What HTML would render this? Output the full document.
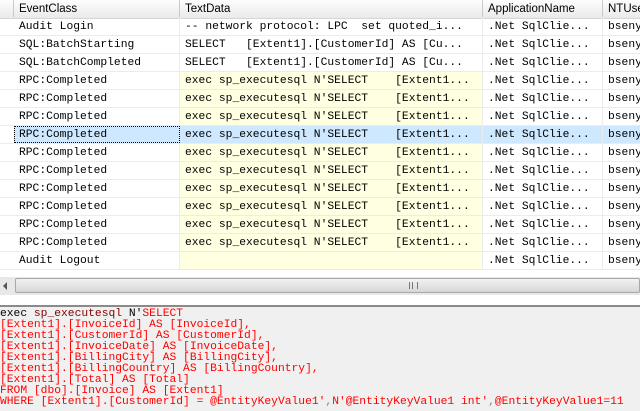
<!DOCTYPE html>
<html><head><style>
body{margin:0;width:640px;height:411px;overflow:hidden;background:#fff;font-family:"Liberation Sans",sans-serif;position:relative}
.hdr{position:absolute;top:0;left:0;width:640px;height:18px;background:linear-gradient(#fdfdfd,#eaeaea);border-bottom:1px solid #d5d5d5}
.hc{position:absolute;top:0;height:17px;border-right:1px solid #c9c9c9;font-size:11.5px;line-height:18px;padding-left:5px;color:#000;box-sizing:border-box}
.row{position:absolute;left:0;width:640px;height:18px;border-bottom:1px solid #ececec;box-sizing:border-box;font-family:"Liberation Mono",monospace;font-size:11.3px;line-height:18px;white-space:pre}
.c{position:absolute;top:0;height:17px;border-right:1px solid #ececec;box-sizing:border-box;padding-left:5px;overflow:hidden}
.y{background:#ffffe1}
.sel .c{background:#cde8ff}
.sb{position:absolute;top:277px;left:0;width:640px;height:18px;background:#e8e8e8}
.th{position:absolute;top:1px;left:15px;right:0;height:15px;background:linear-gradient(#f2f2f2,#d6d6d6);border:1px solid #a8a8a8;border-radius:2px;box-sizing:border-box}
.bot{position:absolute;top:305px;left:0;width:640px;height:106px;background:#f0f0f0;border-top:2px solid #8a8a8a;font-family:"Liberation Mono",monospace;font-size:11.3px;line-height:11px;white-space:pre;color:#f00;padding-top:2px;box-sizing:border-box}
</style></head><body>
<div class="hdr">
<div class="hc" style="left:0;width:14px"></div>
<div class="hc" style="left:14px;width:166px">EventClass</div>
<div class="hc" style="left:180px;width:303px">TextData</div>
<div class="hc" style="left:483px;width:120px">ApplicationName</div>
<div class="hc" style="left:603px;width:40px">NTUser</div>
</div>
<div class="row" style="top:18px"><div class="c" style="left:14px;width:166px">Audit Login</div><div class="c" style="left:180px;width:303px">-- network protocol: LPC  set quoted_i...</div><div class="c" style="left:483px;width:120px">.Net SqlClie...</div><div class="c" style="left:603px;width:40px">bseny</div></div>
<div class="row" style="top:36px"><div class="c" style="left:14px;width:166px">SQL:BatchStarting</div><div class="c" style="left:180px;width:303px">SELECT   [Extent1].[CustomerId] AS [Cu...</div><div class="c" style="left:483px;width:120px">.Net SqlClie...</div><div class="c" style="left:603px;width:40px">bseny</div></div>
<div class="row" style="top:54px"><div class="c" style="left:14px;width:166px">SQL:BatchCompleted</div><div class="c" style="left:180px;width:303px">SELECT   [Extent1].[CustomerId] AS [Cu...</div><div class="c" style="left:483px;width:120px">.Net SqlClie...</div><div class="c" style="left:603px;width:40px">bseny</div></div>
<div class="row" style="top:72px"><div class="c" style="left:14px;width:166px">RPC:Completed</div><div class="c y" style="left:180px;width:303px">exec sp_executesql N'SELECT    [Extent1...</div><div class="c" style="left:483px;width:120px">.Net SqlClie...</div><div class="c" style="left:603px;width:40px">bseny</div></div>
<div class="row" style="top:90px"><div class="c" style="left:14px;width:166px">RPC:Completed</div><div class="c y" style="left:180px;width:303px">exec sp_executesql N'SELECT    [Extent1...</div><div class="c" style="left:483px;width:120px">.Net SqlClie...</div><div class="c" style="left:603px;width:40px">bseny</div></div>
<div class="row" style="top:108px"><div class="c" style="left:14px;width:166px">RPC:Completed</div><div class="c y" style="left:180px;width:303px">exec sp_executesql N'SELECT    [Extent1...</div><div class="c" style="left:483px;width:120px">.Net SqlClie...</div><div class="c" style="left:603px;width:40px">bseny</div></div>
<div class="row sel" style="top:126px"><div class="c" style="left:14px;width:166px;outline:1px dotted #000;outline-offset:-1px">RPC:Completed</div><div class="c" style="left:180px;width:303px">exec sp_executesql N'SELECT    [Extent1...</div><div class="c" style="left:483px;width:120px">.Net SqlClie...</div><div class="c" style="left:603px;width:40px">bseny</div></div>
<div class="row" style="top:144px"><div class="c" style="left:14px;width:166px">RPC:Completed</div><div class="c y" style="left:180px;width:303px">exec sp_executesql N'SELECT    [Extent1...</div><div class="c" style="left:483px;width:120px">.Net SqlClie...</div><div class="c" style="left:603px;width:40px">bseny</div></div>
<div class="row" style="top:162px"><div class="c" style="left:14px;width:166px">RPC:Completed</div><div class="c y" style="left:180px;width:303px">exec sp_executesql N'SELECT    [Extent1...</div><div class="c" style="left:483px;width:120px">.Net SqlClie...</div><div class="c" style="left:603px;width:40px">bseny</div></div>
<div class="row" style="top:180px"><div class="c" style="left:14px;width:166px">RPC:Completed</div><div class="c y" style="left:180px;width:303px">exec sp_executesql N'SELECT    [Extent1...</div><div class="c" style="left:483px;width:120px">.Net SqlClie...</div><div class="c" style="left:603px;width:40px">bseny</div></div>
<div class="row" style="top:198px"><div class="c" style="left:14px;width:166px">RPC:Completed</div><div class="c y" style="left:180px;width:303px">exec sp_executesql N'SELECT    [Extent1...</div><div class="c" style="left:483px;width:120px">.Net SqlClie...</div><div class="c" style="left:603px;width:40px">bseny</div></div>
<div class="row" style="top:216px"><div class="c" style="left:14px;width:166px">RPC:Completed</div><div class="c y" style="left:180px;width:303px">exec sp_executesql N'SELECT    [Extent1...</div><div class="c" style="left:483px;width:120px">.Net SqlClie...</div><div class="c" style="left:603px;width:40px">bseny</div></div>
<div class="row" style="top:234px"><div class="c" style="left:14px;width:166px">RPC:Completed</div><div class="c y" style="left:180px;width:303px">exec sp_executesql N'SELECT    [Extent1...</div><div class="c" style="left:483px;width:120px">.Net SqlClie...</div><div class="c" style="left:603px;width:40px">bseny</div></div>
<div class="row" style="top:252px"><div class="c" style="left:14px;width:166px">Audit Logout</div><div class="c y" style="left:180px;width:303px"></div><div class="c" style="left:483px;width:120px">.Net SqlClie...</div><div class="c" style="left:603px;width:40px">bseny</div></div>
<div class="sb"><div style="position:absolute;left:3px;top:5px;width:0;height:0;border-top:4px solid transparent;border-bottom:4px solid transparent;border-right:4px solid #555"></div><div class="th"><div style="position:absolute;left:393px;top:3px;width:7px;height:7px;border-left:1px solid #777;border-right:1px solid #777"><div style="margin-left:2px;width:1px;height:7px;background:#777"></div></div></div></div>
<div class="bot"><span style="color:#000">exec </span><span style="color:#800000">sp_executesql</span><span style="color:#000"> N'</span>SELECT
[Extent1].[InvoiceId] AS [InvoiceId],
[Extent1].[CustomerId] AS [CustomerId],
[Extent1].[InvoiceDate] AS [InvoiceDate],
[Extent1].[BillingCity] AS [BillingCity],
[Extent1].[BillingCountry] AS [BillingCountry],
[Extent1].[Total] AS [Total]
FROM [dbo].[Invoice] AS [Extent1]
WHERE [Extent1].[CustomerId] = @EntityKeyValue1'<span style="color:#888">,</span>N'@EntityKeyValue1 int'<span style="color:#888">,</span>@EntityKeyValue1=11</div>
</body></html>
